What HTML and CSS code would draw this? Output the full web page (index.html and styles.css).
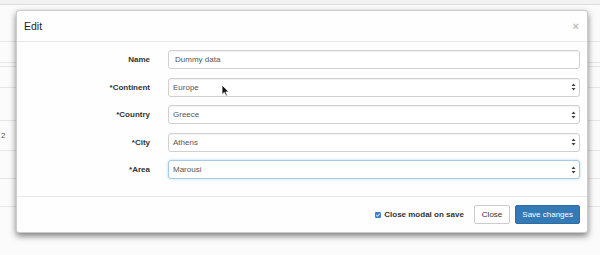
FILE: index.html
```html
<!DOCTYPE html>
<html lang="en">
<head>
    <meta charset="UTF-8">
    <meta name="viewport" content="width=device-width, initial-scale=1.0">
    <title>Edit</title>
    <link rel="stylesheet" href="styles.css">
</head>
<body>
    <div class="page">
        <div class="row row-top"></div>
        <div class="row" style="height: 37px"></div>
        <div class="row" style="height: 21px"></div>
        <div class="row" style="height: 4px"></div>
        <div class="row" style="height: 21px"></div>
        <div class="row" style="height: 33px"></div>
        <div class="row" style="height: 30px"><span class="cell-num">2</span></div>
        <div class="row" style="height: 28px"></div>
        <div class="row" style="height: 28px"></div>
    </div>

    <div class="modal">
        <div class="modal-header">
            <h4 class="modal-title">Edit</h4>
            <span class="close">&times;</span>
        </div>
        <div class="modal-body">
            <label class="control-label">Name</label>
            <div class="form-control">Dummy data</div>

            <label class="control-label">*Continent</label>
            <div class="form-control select">
                <span>Europe</span>
                <svg class="caret" width="5" height="8" viewBox="0 0 5 8"><path d="M2.5 0.5 L4.5 3 H0.5 Z M2.5 7.5 L4.5 5 H0.5 Z" fill="#444"/></svg>
            </div>

            <label class="control-label">*Country</label>
            <div class="form-control select">
                <span>Greece</span>
                <svg class="caret" width="5" height="8" viewBox="0 0 5 8"><path d="M2.5 0.5 L4.5 3 H0.5 Z M2.5 7.5 L4.5 5 H0.5 Z" fill="#444"/></svg>
            </div>

            <label class="control-label">*City</label>
            <div class="form-control select">
                <span>Athens</span>
                <svg class="caret" width="5" height="8" viewBox="0 0 5 8"><path d="M2.5 0.5 L4.5 3 H0.5 Z M2.5 7.5 L4.5 5 H0.5 Z" fill="#444"/></svg>
            </div>

            <label class="control-label">*Area</label>
            <div class="form-control select focus">
                <span>Marousi</span>
                <svg class="caret" width="5" height="8" viewBox="0 0 5 8"><path d="M2.5 0.5 L4.5 3 H0.5 Z M2.5 7.5 L4.5 5 H0.5 Z" fill="#444"/></svg>
            </div>
        </div>
        <div class="modal-footer">
            <label class="check">
                <span class="box">
                    <svg width="6" height="6" viewBox="0 0 6 6"><path d="M1.2 3.1 L2.5 4.3 L4.8 1.6" fill="none" stroke="#fff" stroke-width="1"/></svg>
                </span>
                Close modal on save
            </label>
            <button class="btn btn-default">Close</button>
            <button class="btn btn-primary">Save changes</button>
        </div>
    </div>

    <svg class="cursor" width="9" height="13" viewBox="0 0 9 13">
        <path d="M1 1 L1 10.5 L3.3 8.4 L5 12 L6.4 11.4 L4.8 7.9 L7.8 7.9 Z" fill="#111" stroke="#fff" stroke-width="0.8"/>
    </svg>
</body>
</html>
```

FILE: styles.css
```css
body {
    margin: 0;
    background: #fbfbfc;
    font-family: "Liberation Sans", Arial, sans-serif;
    font-size: 8px;
    color: #333;
    width: 600px;
    height: 255px;
    overflow: hidden;
}
.row {
    border-bottom: 1px solid #e6e6e8;
    box-sizing: border-box;
    display: flex;
    align-items: center;
}
.row-top {
    height: 5px;
    background: #f2f2f3;
    border-bottom-color: #dcdcde;
}
.cell-num {
    margin-left: 1px;
    color: #555;
    font-size: 8px;
}
.modal {
    position: absolute;
    top: 10px;
    left: 16px;
    width: 572px;
    box-sizing: border-box;
    background: #fefefe;
    border: 1px solid rgba(0, 0, 0, 0.2);
    border-radius: 3px;
    box-shadow: 0 3px 6px rgba(0, 0, 0, 0.5);
}
.modal-header {
    height: 31px;
    box-sizing: border-box;
    display: flex;
    align-items: center;
    padding: 0 8px 0 7px;
    border-bottom: 1px solid #e8e8ea;
}
.modal-title {
    margin: 0;
    font-size: 10.5px;
    font-weight: normal;
    color: #222;
}
.close {
    margin-left: auto;
    font-size: 11px;
    font-weight: bold;
    color: #bcbcbc;
    line-height: 1;
}
.modal-body {
    display: grid;
    grid-template-columns: 125px 1fr;
    column-gap: 18px;
    row-gap: 8.5px;
    padding: 8px 7px 17px 8px;
}
.control-label {
    display: flex;
    align-items: center;
    justify-content: flex-end;
    font-weight: bold;
    color: #333;
}
.form-control {
    height: 19px;
    box-sizing: border-box;
    display: flex;
    align-items: center;
    padding: 0 6px;
    border: 1px solid #d0d0d2;
    border-radius: 3px;
    background: #fff;
    color: #555;
    box-shadow: inset 0 1px 1px rgba(0, 0, 0, 0.05);
}
.select {
    padding: 0 3px 0 4px;
}
.caret {
    margin-left: auto;
}
.focus {
    border-color: #a9c8e6;
    box-shadow: 0 0 3px rgba(102, 175, 233, 0.45);
}
.modal-footer {
    display: flex;
    align-items: center;
    justify-content: flex-end;
    padding: 8px 7px 8px;
    border-top: 1px solid #e8e8ea;
}
.check {
    display: flex;
    align-items: center;
    gap: 3px;
    font-weight: bold;
    color: #333;
    margin-right: 10px;
}
.box {
    width: 6px;
    height: 6px;
    border-radius: 1px;
    background: #3b82d6;
    display: flex;
}
.btn {
    height: 19px;
    box-sizing: border-box;
    font-family: inherit;
    font-size: 8px;
    border-radius: 2px;
    padding: 0 7px;
    cursor: pointer;
}
.btn-default {
    background: #fff;
    border: 1px solid #ccc;
    color: #333;
    margin-right: 5px;
}
.btn-primary {
    background: #337ab7;
    border: 1px solid #2e6da4;
    color: #fff;
    padding: 0 6px;
}
.cursor {
    position: absolute;
    left: 221px;
    top: 84px;
}
```
